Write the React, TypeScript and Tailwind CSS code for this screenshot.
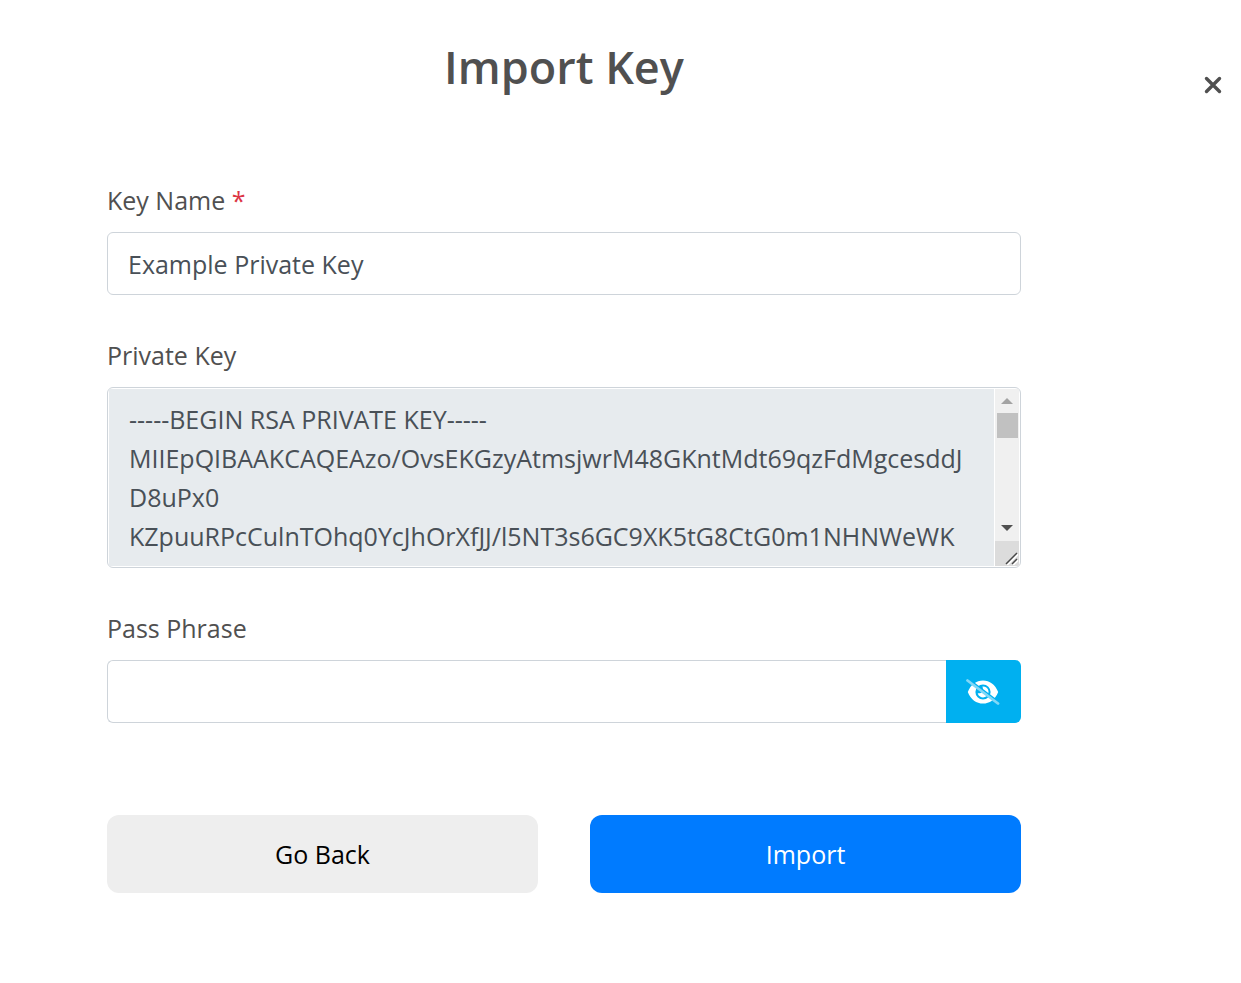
import { useRef, useState } from "react";

const KEY_TEXT = [
  "-----BEGIN RSA PRIVATE KEY-----",
  "MIIEpQIBAAKCAQEAzo/OvsEKGzyAtmsjwrM48GKntMdt69qzFdMgcesddJ",
  "D8uPx0",
  "KZpuuRPcCulnTOhq0YcJhOrXfJJ/l5NT3s6GC9XK5tG8CtG0m1NHNWeWK",
].join("\n");

function CloseIcon() {
  return (
    <svg className="size-5" viewBox="0 0 20 20" fill="none" stroke="currentColor" strokeWidth="3.400" strokeLinecap="round" aria-hidden="true">
      <path d="M3.5 3.5 16.5 16.5M16.5 3.5 3.5 16.5" />
    </svg>
  );
}

function EyeSlashIcon() {
  return (
    <svg className="h-[28px] w-[34px]" viewBox="0 0 34 28" aria-hidden="true">
      <path
        fill="white"
        fillRule="evenodd"
        d="M1.800 14C4.800 6.400 10.400 2.400 17 2.400S29.200 6.400 32.200 14c-3 7.600-8.600 11.600-15.200 11.600S4.800 21.600 1.800 14ZM17 6.400a7.600 7.600 0 1 0 0 15.200 7.600 7.600 0 0 0 0-15.200Z"
      />
      <path fill="white" d="M16.400 8.500a5.500 5.500 0 1 1-4.700 6.700c1.900.6 4.400-.4 5-2.500.4-1.500.2-3-.3-4.200Z" />
      <path d="M3.200 1.800 33 24.200" stroke="#00b0f0" strokeWidth="1.800" />
      <path d="M1.500 2.500 32 25.500" stroke="#80d7f7" strokeWidth="2.800" strokeLinecap="round" />
    </svg>
  );
}

const labelClass = "block text-[25px] leading-[38px] text-[#505050]";

export default function App() {
  const [name, setName] = useState("Example Private Key");
  const [phrase, setPhrase] = useState("");
  const [visible, setVisible] = useState(false);
  const keyBox = useRef<HTMLTextAreaElement>(null);

  const scroll = (amount: number) => keyBox.current?.scrollBy({ top: amount });

  return (
    <div className="flex min-h-screen bg-white font-['Segoe_UI','Open_Sans',sans-serif] text-[#505050]">
      <main className="min-w-0 flex-1 pt-[39px] pl-[107px]">
        <h1 className="text-center text-[45px] leading-[56px] font-semibold">Import Key</h1>

        <form className="pt-[86px] pb-10" onSubmit={(e) => e.preventDefault()}>
          <div>
            <label htmlFor="key-name" className={labelClass}>
              Key Name <span className="text-[#dc3545]">*</span>
            </label>
            <input
              id="key-name"
              type="text"
              required
              value={name}
              onChange={(e) => setName(e.target.value)}
              className="mt-[13px] block h-[63px] w-full rounded-md border border-[#ced4da] bg-white px-5 pt-px text-[25px] text-[#495057]"
            />
          </div>

          <div className="mt-[41px]">
            <label htmlFor="private-key" className={labelClass}>
              Private Key
            </label>
            <div className="mt-[13px] flex h-[181px] overflow-hidden rounded-md border border-[#ced4da] bg-white p-px">
              <textarea
                id="private-key"
                ref={keyBox}
                readOnly
                wrap="off"
                value={KEY_TEXT}
                className="block min-w-0 flex-1 resize-none overflow-hidden bg-[#e7ebee] px-5 py-[11px] text-[25px] leading-[39px] text-[#495057] outline-none"
              />
              <div className="ml-px flex w-6 flex-col bg-[#f0f0f0]">
                <button type="button" aria-label="Scroll up" onClick={() => scroll(-39)} className="flex h-6 items-center justify-center">
                  <svg className="h-[6px] w-[12px]" viewBox="0 0 12 6" aria-hidden="true">
                    <path d="M0 6 6 0l6 6Z" fill="#a3a3a3" />
                  </svg>
                </button>
                <div className="mx-auto h-[25px] w-[21px] bg-[#c1c1c1]" />
                <button
                  type="button"
                  aria-label="Scroll down"
                  onClick={() => scroll(39)}
                  className="mt-auto flex h-[27px] items-center justify-center"
                >
                  <svg className="h-[6px] w-[12px]" viewBox="0 0 12 6" aria-hidden="true">
                    <path d="M0 0h12L6 6Z" fill="#505050" />
                  </svg>
                </button>
                <div className="flex h-[25px] items-end justify-end bg-[#dcdcdc] pr-px pb-px">
                  <svg className="size-[13px]" viewBox="0 0 13 13" fill="none" aria-hidden="true">
                    <path d="M2 13 13 2M8 13 13 8" stroke="white" strokeWidth="2" />
                    <path d="M1 12 12 1M7 12 12 7" stroke="#484848" strokeWidth="1.500" />
                  </svg>
                </div>
              </div>
            </div>
          </div>

          <div className="mt-[41px]">
            <label htmlFor="pass-phrase" className={labelClass}>
              Pass Phrase
            </label>
            <div className="mt-[13px] flex h-[63px]">
              <input
                id="pass-phrase"
                type={visible ? "text" : "password"}
                value={phrase}
                onChange={(e) => setPhrase(e.target.value)}
                className="block min-w-0 flex-1 rounded-l-md border border-r-0 border-[#ced4da] bg-white px-5 text-[25px] text-[#495057]"
              />
              <button
                type="button"
                aria-label="Toggle pass phrase visibility"
                onClick={() => setVisible(!visible)}
                className="flex w-[75px] items-center justify-center rounded-r-md bg-[#00b0f0] pr-px"
              >
                <EyeSlashIcon />
              </button>
            </div>
          </div>

          <div className="mt-[92px] grid grid-cols-2 gap-[52px] text-[25px]">
            <button type="button" className="h-[78px] rounded-xl bg-[#eeeeee] pt-px text-black">
              Go Back
            </button>
            <button type="submit" className="h-[78px] rounded-xl bg-[#007bff] pt-px text-white">
              Import
            </button>
          </div>
        </form>
      </main>

      <div className="flex w-[220px] items-start justify-end pt-[75px] pr-[18px]">
        <button type="button" aria-label="Close">
          <CloseIcon />
        </button>
      </div>
    </div>
  );
}
